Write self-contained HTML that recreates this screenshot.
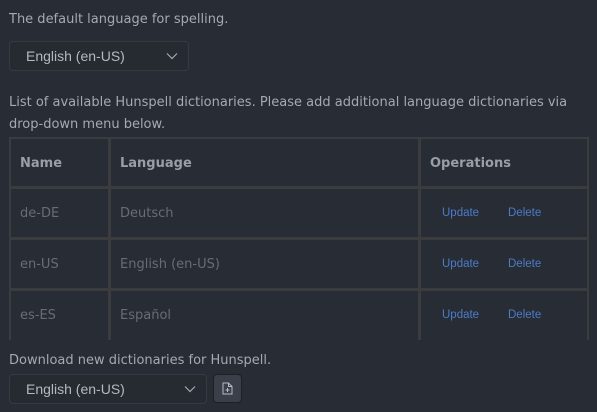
<!DOCTYPE html>
<html><head><style>
body{margin:0;width:597px;height:412px;background:#282c34;font-family:"Liberation Sans",sans-serif;position:relative;overflow:hidden;color:#a5a9b0}
.a{position:absolute;white-space:nowrap}
.t{font-family:"DejaVu Sans","Liberation Sans",sans-serif;font-size:13px;color:#a5a9b0}
.sel{position:absolute;border:1px solid #363a42;border-radius:4px;background:#262a31;color:#b4b8bf;font-size:14px;box-sizing:border-box}
.h{position:absolute;background:#3b3c3d}
.hd{font-family:"DejaVu Sans",sans-serif;font-weight:bold;font-size:13px;color:#9a9ea5}
.c{font-family:"DejaVu Sans",sans-serif;font-size:13px;color:#686c73}
.l{font-size:11.5px;color:#4d7bcb}
</style></head><body>
<div class="a t" style="left:9px;top:12px">The default language for spelling.</div>
<div class="sel" style="left:9px;top:41px;width:180px;height:30px"><span class="a" style="left:16px;top:6px">English (en-US)</span>
<svg class="a" style="left:156px;top:10px" width="12" height="8"><path d="M1 1.5 L6 6.5 L11 1.5" stroke="#a5a9b0" fill="none" stroke-width="1.2"/></svg></div>
<div class="a t" style="left:9px;top:95px">List of available Hunspell dictionaries. Please add additional language dictionaries via</div>
<div class="a t" style="left:9px;top:117px">drop-down menu below.</div>
<div class="h" style="left:9px;top:137px;width:580px;height:2px"></div>
<div class="h" style="left:9px;top:186px;width:580px;height:3px"></div>
<div class="h" style="left:9px;top:237px;width:580px;height:3px"></div>
<div class="h" style="left:9px;top:288px;width:580px;height:3px"></div>
<div class="h" style="left:9px;top:137px;width:2px;height:203px"></div>
<div class="h" style="left:108px;top:137px;width:3px;height:203px"></div>
<div class="h" style="left:418px;top:137px;width:3px;height:203px"></div>
<div class="h" style="left:587px;top:137px;width:2px;height:203px"></div>
<div class="a hd" style="left:20px;top:156px">Name</div>
<div class="a hd" style="left:120px;top:156px">Language</div>
<div class="a hd" style="left:430px;top:156px">Operations</div>
<div class="a c" style="left:20px;top:206px">de-DE</div><div class="a c" style="left:120px;top:206px">Deutsch</div>
<div class="a l" style="left:442px;top:207px">Update</div><div class="a l" style="left:508px;top:207px">Delete</div>
<div class="a c" style="left:20px;top:257px">en-US</div><div class="a c" style="left:120px;top:257px">English (en-US)</div>
<div class="a l" style="left:442px;top:258px">Update</div><div class="a l" style="left:508px;top:258px">Delete</div>
<div class="a c" style="left:20px;top:308px">es-ES</div><div class="a c" style="left:120px;top:308px">Español</div>
<div class="a l" style="left:442px;top:309px">Update</div><div class="a l" style="left:508px;top:309px">Delete</div>
<div class="a t" style="left:9px;top:353px">Download new dictionaries for Hunspell.</div>
<div class="sel" style="left:9px;top:374px;width:198px;height:30px"><span class="a" style="left:16px;top:6px">English (en-US)</span>
<svg class="a" style="left:174px;top:10px" width="12" height="8"><path d="M1 1.5 L6 6.5 L11 1.5" stroke="#a5a9b0" fill="none" stroke-width="1.2"/></svg></div>
<div class="a" style="left:213px;top:374px;width:29px;height:29px;box-sizing:border-box;border:1px solid #1d2026;border-radius:4px;background:#3a3f4a"></div>
<svg class="a" style="left:222px;top:382px" width="11" height="13"><path d="M1 1 H6.5 L10 4.5 V12 H1 Z M6.5 1 V4.5 H10" stroke="#b8bcc3" fill="none" stroke-width="1"/><path d="M5.5 6 V10 M3.5 8 H7.5" stroke="#b8bcc3" stroke-width="1"/></svg>
</body></html>
